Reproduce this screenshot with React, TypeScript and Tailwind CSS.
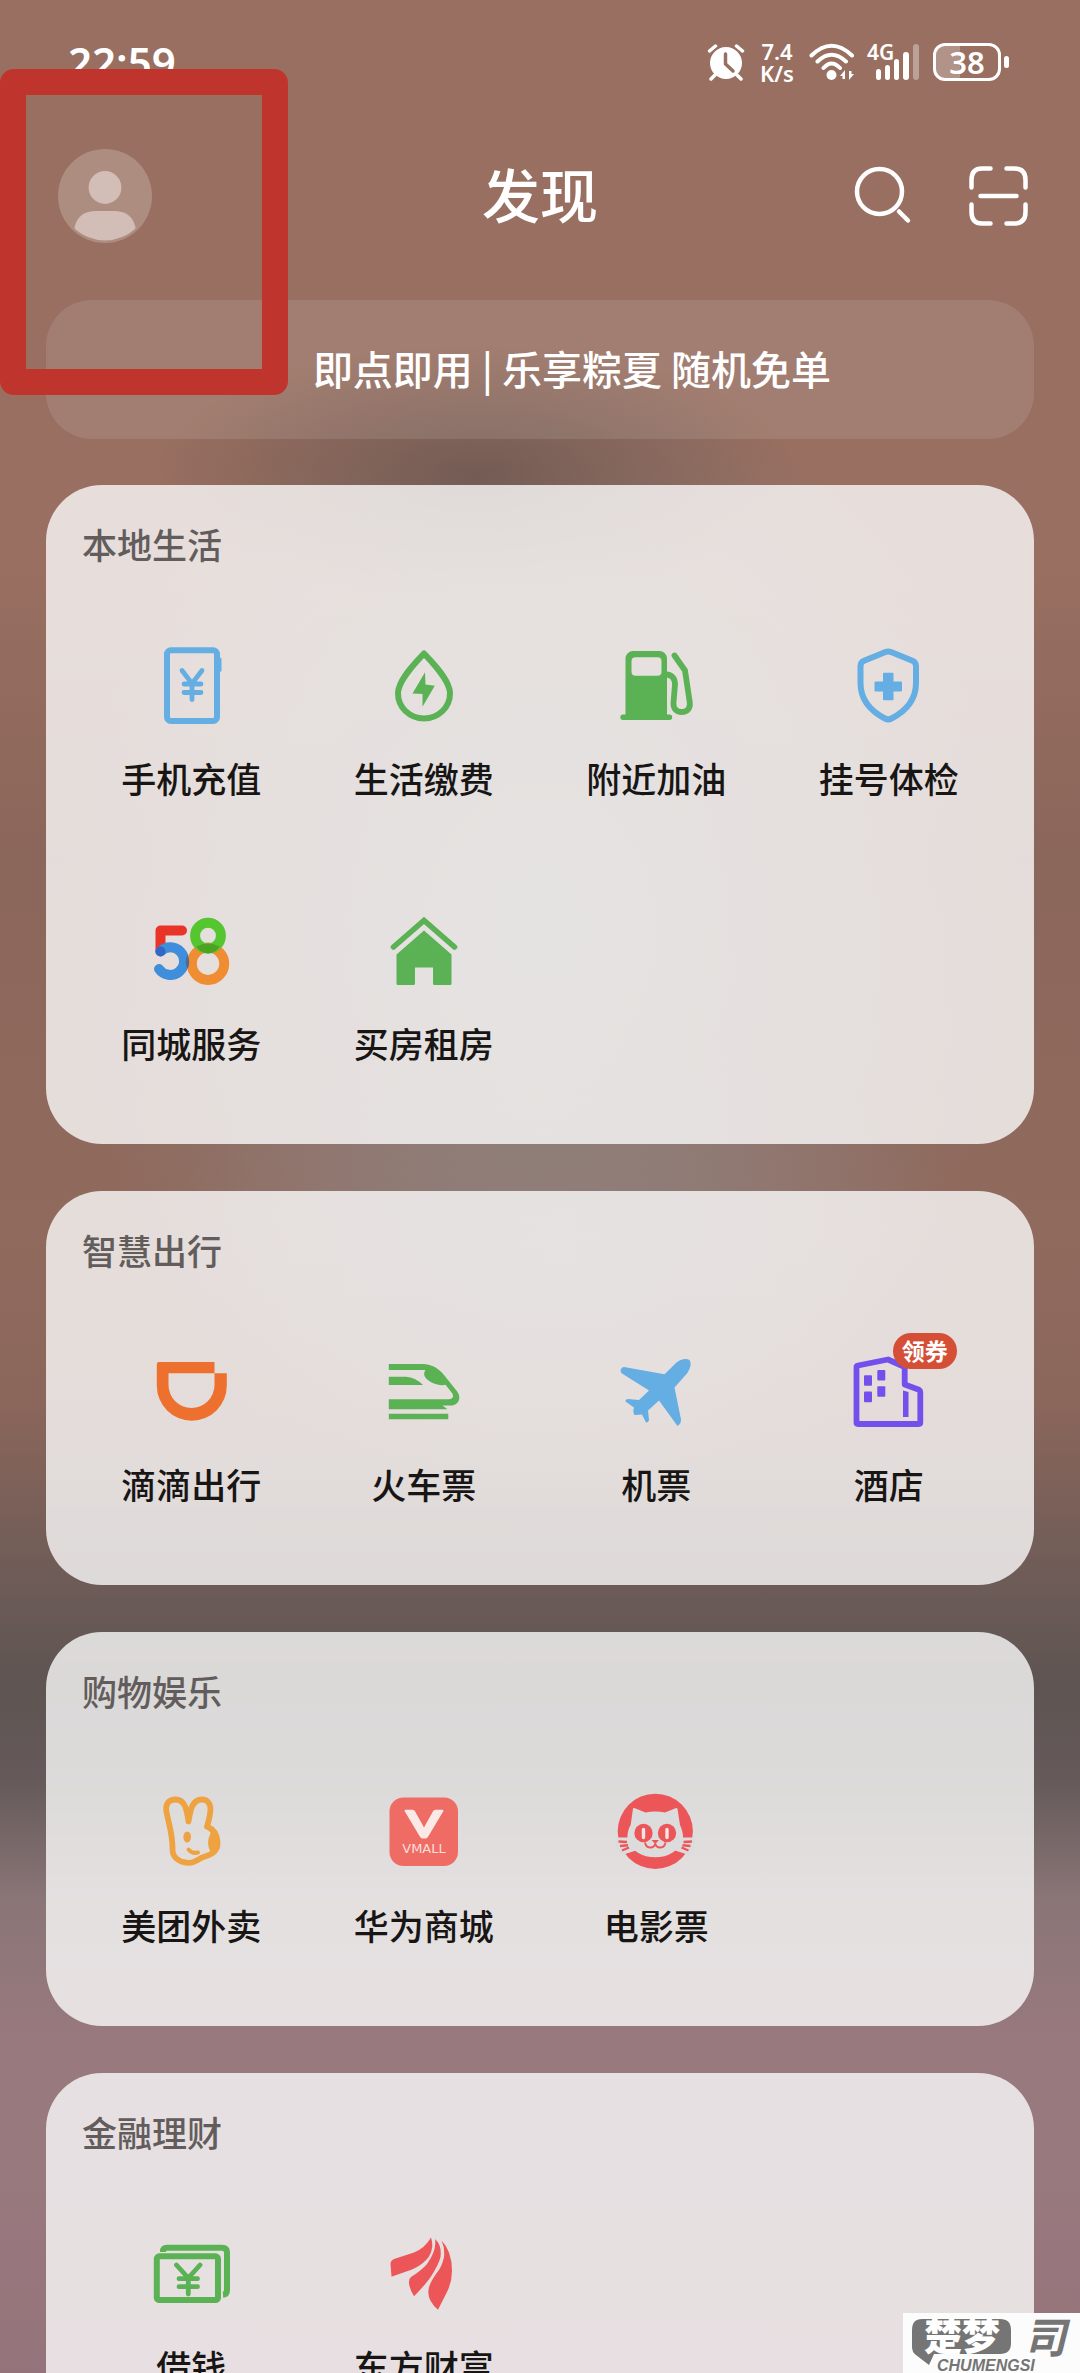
import type { ReactNode } from "react";

type Service = {
  name: string;
  icon: ReactNode;
  badge?: string;
};

type Section = {
  title: string;
  services: Service[];
};

const BLUE = "#65aee3";
const GREEN = "#5bb255";
const RED = "#ed5659";

function Icon({ children }: { children: ReactNode }) {
  return (
    <svg viewBox="0 0 80 80" className="size-20" fill="none" aria-hidden="true">
      {children}
    </svg>
  );
}

const PhoneTopUp = () => (
  <Icon>
    <rect x="16" y="5.3" width="50" height="70.7" rx="4" stroke={BLUE} strokeWidth="6" />
    <path d="M68 12.5h1a1.5 1.5 0 0 1 1.5 1.5v12.5h-2.5z" fill={BLUE} />
    <path d="M31 25.5l10 13 10-13M41 38.5v16M33 39h17M33 47.5h17" stroke={BLUE} strokeWidth="4.8" strokeLinecap="round" />
  </Icon>
);

const Utilities = () => (
  <Icon>
    <path d="M40 8.5C32 17 14 35 14 48.5a26 25 0 0 0 52 0C66 35 48 17 40 8.5z" stroke={GREEN} strokeWidth="6" strokeLinejoin="round" />
    <path d="M41 27.3L28.5 48.6l10 .4v12.7l12.3-21-9.3-1.2z" fill={GREEN} />
  </Icon>
);

const FuelPump = () => (
  <Icon>
    <path
      d="M17 6h26.5a7.5 7.5 0 0 1 7.5 7.5V69.5h2.5a2.7 2.7 0 0 1 0 5.4H7a2.7 2.7 0 0 1 0-5.4h2.5V13.5A7.5 7.5 0 0 1 17 6zm2.5 6.3a4 4 0 0 0-4 4v10.4a4 4 0 0 0 4 4h22a4 4 0 0 0 4-4V16.3a4 4 0 0 0-4-4z"
      fill={GREEN}
      fillRule="evenodd"
    />
    <path
      d="M51 29.5c5 .5 8 4 8 10l-1.5 18c-.5 6 3 9.5 8 9.5 6 0 9-4 8.3-9.5L69 25.5l-10.5-15"
      stroke={GREEN}
      strokeWidth="5.8"
      strokeLinecap="round"
      strokeLinejoin="round"
    />
  </Icon>
);

const Health = () => (
  <Icon>
    <path
      d="M36.5 7Q39.3 5.8 42 7L63.5 15.8Q67 17.3 67 21V38C67 55 56 66.5 42.5 73.5Q39.3 75.2 36 73.5C22.5 66.5 11.5 55 11.5 38V21Q11.5 17.3 15 15.8Z"
      stroke={BLUE}
      strokeWidth="6"
    />
    <path d="M35 27.7h8.5a1 1 0 0 1 1 1v7.8h7.5a1 1 0 0 1 1 1V45.5a1 1 0 0 1-1 1h-7.5v7.8a1 1 0 0 1-1 1H35a1 1 0 0 1-1-1v-7.8h-7.5a1 1 0 0 1-1-1V37.5a1 1 0 0 1 1-1H34v-7.8a1 1 0 0 1 1-1z" fill={BLUE} />
  </Icon>
);

const FiveEight = () => (
  <Icon>
    <g strokeLinecap="round" strokeLinejoin="round" strokeWidth="10">
      <path d="M31 20.5H9.5V41" stroke="#e93428" />
      <path d="M9.5 41.5A13.8 13.8 0 1 1 8 59" stroke="#3f8edb" />
      <circle cx="57" cy="53.7" r="16.2" stroke="#f08c32" />
      <circle cx="57" cy="25.7" r="12.9" stroke="#55c62f" />
    </g>
    <circle cx="9.5" cy="41.5" r="5" fill="#3167c6" />
    <path d="M45.5 36.5Q57 30.5 68.5 36.5Q65 43 57 43.4Q49 43 45.5 36.5z" fill="#4ca323" />
    <path d="M36.5 44.5q3.5 8 0 14.5q-3.5-7 0-14.5z" fill="#53688c" />
  </Icon>
);

const House = () => (
  <Icon>
    <path d="M9.5 37L40 10.5 70.5 37" stroke={GREEN} strokeWidth="5.6" strokeLinecap="round" />
    <path d="M40 20.5L67.5 44.5V73.5a1.5 1.5 0 0 1-1.5 1.5H50.5a1.5 1.5 0 0 1-1.5-1.5V57.5H31V73.5a1.5 1.5 0 0 1-1.5 1.5H14a1.5 1.5 0 0 1-1.5-1.5V44.5z" fill={GREEN} />
  </Icon>
);

const Ride = () => (
  <Icon>
    <path d="M8 11H63.5V22.3H75.8V34.7a35 35 0 0 1-70 0V13.2A2.2 2.2 0 0 1 8 11zM17.5 22.3V34a23 23 0 0 0 46 0V22.3z" fill="#ee702e" />
  </Icon>
);

const Train = () => (
  <Icon>
    <path
      d="M4.8 13H38C49 13 55 18 60 24L72 39C79 47 74 55 66 54.5H58.5L63.5 58.3H4.8V48.3H65C69 48 70 45 68 42L61.5 33.8C55 35.5 44 31 41 26C39.5 23 40 21 41.5 19H4.8ZM4.8 25.7H22Q31 26 39 34H4.8ZM4.8 62.7H64.3V68.3H4.8Z"
      fill={GREEN}
    />
  </Icon>
);

const Plane = () => (
  <Icon>
    <path
      d="M4.5 19.5Q5.5 16 8 16L48.5 23.3L60 12C64 8.5 70 7 73.5 9C76 12.5 74 18 71 22.5L58.5 36.5L65 68.5Q65 73 61.5 75L43 49.5L32 59.5L33 69Q32.5 71.5 30 71.5L26 63.5L18.5 64Q16.5 61 18 56.5L9.5 50.5Q9.5 48 12 48L23 49L33 39.5L6 22.5Q4.5 21 4.5 19.5z"
      fill={BLUE}
    />
  </Icon>
);

const Hotel = () => (
  <Icon>
    <path d="M7.5 16Q7.5 14.8 9 14.5L39 8.5 55.7 16V33.5L70 38.8Q71.3 39.5 71.3 41V71.5Q71.3 73 69.8 73H9Q7.5 73 7.5 71.5Z" stroke="#7350ec" strokeWidth="5.8" strokeLinejoin="round" />
    <g fill="#7350ec">
      <rect x="15" y="24.3" width="8" height="10.5" rx="1" />
      <rect x="15" y="40.5" width="8" height="10.8" rx="1" />
      <rect x="28.3" y="19" width="8" height="10.5" rx="1" />
      <rect x="28.3" y="35.3" width="8" height="10.5" rx="1" />
      <path d="M54 39.5l5.5 1.5V66H54z" />
    </g>
  </Icon>
);

const Bunny = () => (
  <Icon>
    <path
      d="M37.5 29.5C36 18 34 7.5 24.5 7.5C17 7.5 14 13 15.5 20C18 33 21.5 42 21.5 56C21 64 26 70.5 38 70.8C44 71 46 67 54 64.5C63 62 67 57 66.5 50C66 42 62 37 56 34.5C58 28 59.5 21 59.5 16C59 10.5 55.5 7.5 51 7.5C41 7.5 39.5 18 37.5 29.5Z"
      stroke="#efa240"
      strokeWidth="5.8"
      strokeLinejoin="round"
    />
    <path d="M60 40C68 43 70.5 51 67 57Q64 61 60 60Q54 52 60 40z" fill="#efa240" />
    <ellipse cx="36.2" cy="45" rx="3.8" ry="5.6" fill="#efa240" />
    <path d="M37.5 57.5Q41 62 47 60.5" stroke="#efa240" strokeWidth="4" strokeLinecap="round" />
  </Icon>
);

const Vmall = () => (
  <Icon>
    <rect x="5.5" y="5.5" width="68.5" height="68.5" rx="14" fill="#ef6c64" />
    <path d="M21.5 17.7h7.2q1.5 0 2.3 1.5L40 35.5l9-16.3q.8-1.5 2.3-1.5h7.2q1.5 0 .8 1.5L44.5 44q-1.5 2.5-3 2.5h-3q-1.5 0-3-2.5L20.7 19.2q-.7-1.5.8-1.5z" fill="#fbe9e7" />
    <text x="40" y="61" textAnchor="middle" fill="#fbdedb" className="font-['DejaVu_Sans'] text-[13px]">
      VMALL
    </text>
  </Icon>
);

const Cat = () => (
  <Icon>
    <circle cx="39.3" cy="39.3" r="37.6" fill={RED} />
    <g fill="#dddcdc">
      <path d="M17 16.5Q17.5 15.5 19 16.3L29.5 20.5Q39 18.5 49 20.5L59.5 16.3Q61 15.5 61.5 17L64 33C66 37 68 44 66.5 48C63 59 52 65.3 39.3 65.3C26.5 65.3 15 59 12 48C10.5 44 12.5 36 14.7 33z" />
      <path d="M0 45.5h14l6 13L6 63L0 56zM79 45.5H65l-6 13L73 63l6-7z" />
    </g>
    <path d="M2.5 49.5l8.5.5M4 54l8-.8M6 58.5l7-3M76 49.5l-8.5.5M74.5 54l-8-.8M72.5 58.5l-7-3" stroke={RED} strokeWidth="2.4" />
    <circle cx="27.5" cy="41" r="9.2" fill={RED} />
    <circle cx="51" cy="41" r="9.2" fill={RED} />
    <path d="M27.5 37.5v8M51 37.5v8" stroke="#f4e4e4" strokeWidth="3.4" strokeLinecap="round" />
    <path d="M29 50.5C30 57 38 57 39.3 51.5C40.5 57 48.5 57 49.5 50.5" stroke={RED} strokeWidth="1.8" />
    <path d="M35.5 48h7.5l-3.7 4z" fill={RED} />
  </Icon>
);

const Loan = () => (
  <Icon>
    <path d="M12 19V18.5Q12 14.8 16 14.8H71Q76 14.8 76 19.5V57Q76 61.5 72 61.8" stroke={GREEN} strokeWidth="6" />
    <rect x="5.8" y="23.3" width="61.2" height="43.7" rx="2.5" stroke={GREEN} strokeWidth="6" />
    <path d="M25.5 32l11.8 13L49 32M37.3 45v16M28 45.7h18.5M28 53.7h18.5" stroke={GREEN} strokeWidth="4.8" strokeLinecap="round" />
  </Icon>
);

const EastMoney = () => (
  <Icon>
    <g fill={RED}>
      <path d="M47 4.5Q41 15 30 19.5L10 26Q6.5 27.5 6.5 31L7.5 43.7Q18 40 28 36.5Q40 31 45 23.5Q50.5 14 47 4.5z" />
      <path d="M51 6Q53 17 43 31Q38 37 27 44Q24.5 46 25 50.5Q26 57 30 63.3Q42 51 47 43.5Q55 31 56.5 24Q58 12 51 6z" />
      <path d="M57.5 7.5Q61 15 60 24Q58 34 52 41Q45 51 44.5 57Q43 67 54 76.7Q59 67 63 59Q68 49 68 38Q68 18 57.5 7.5z" />
    </g>
  </Icon>
);

const sections: Section[] = [
  {
    title: "本地生活",
    services: [
      { name: "手机充值", icon: <PhoneTopUp /> },
      { name: "生活缴费", icon: <Utilities /> },
      { name: "附近加油", icon: <FuelPump /> },
      { name: "挂号体检", icon: <Health /> },
      { name: "同城服务", icon: <FiveEight /> },
      { name: "买房租房", icon: <House /> },
    ],
  },
  {
    title: "智慧出行",
    services: [
      { name: "滴滴出行", icon: <Ride /> },
      { name: "火车票", icon: <Train /> },
      { name: "机票", icon: <Plane /> },
      { name: "酒店", icon: <Hotel />, badge: "领券" },
    ],
  },
  {
    title: "购物娱乐",
    services: [
      { name: "美团外卖", icon: <Bunny /> },
      { name: "华为商城", icon: <Vmall /> },
      { name: "电影票", icon: <Cat /> },
    ],
  },
  {
    title: "金融理财",
    services: [
      { name: "借钱", icon: <Loan /> },
      { name: "东方财富", icon: <EastMoney /> },
    ],
  },
];

function StatusBar() {
  return (
    <div className="flex h-[124px] items-center justify-between pr-[71px] pl-[68px] font-['Noto_Sans',sans-serif] font-semibold">
      <span className="text-[42px] leading-[48px]">22:59</span>
      <div className="flex items-center">
        <svg viewBox="0 0 38 38" className="size-[38px]" fill="none" aria-hidden="true">
          <circle cx="19" cy="20" r="16" fill="#fff" />
          <path d="M2.5 8l6-5M35.5 8l-6-5M8 32l-4 4M30 32l4 4" stroke="#fff" strokeWidth="3.5" strokeLinecap="round" />
          <path d="M18.5 11v10l7.5 7" stroke="#967062" strokeWidth="3.5" strokeLinecap="round" strokeLinejoin="round" />
        </svg>
        <div className="ml-[14px] flex w-9 flex-col items-center text-[22px] leading-[22px]">
          <span>7.4</span>
          <span>K/s</span>
        </div>
        <svg viewBox="0 0 46 38" className="ml-[14px] h-[38px] w-[46px]" fill="none" aria-hidden="true">
          <path d="M2.5 12.5Q22.5-7 43 12.5M8.5 18.5Q22.5 5 37 18.5M14.5 25Q22.5 16 31 25" stroke="#fff" strokeWidth="4" strokeLinecap="round" />
          <circle cx="22.5" cy="32" r="5" fill="#fff" />
          <path d="M31 33l5-6v9h-2.5v-3zM45 31l-5 6v-9h2.5v3z" fill="#fff" />
        </svg>
        <svg viewBox="0 0 54 38" className="ml-3 h-[38px] w-[54px] overflow-visible" aria-hidden="true">
          <text x="0" y="17" fill="#fff" className="font-['Noto_Sans'] text-[21px]">
            4G
          </text>
          <g fill="#fff">
            <rect x="9" y="26" width="5" height="11" rx="2.5" />
            <rect x="18" y="22" width="5" height="15" rx="2.5" />
            <rect x="27" y="16" width="5" height="21" rx="2.5" />
            <rect x="36" y="9" width="6" height="28" rx="3" />
            <rect x="46" y="1" width="6" height="36" rx="3" fillOpacity="0.35" />
          </g>
        </svg>
        <div className="ml-3 flex items-center gap-[3px]">
          <div className="flex h-[38px] w-[68px] items-center justify-center rounded-xl border-[3px] border-white bg-linear-to-r from-white/25 from-38% to-transparent to-38% text-[31px] leading-none">
            38
          </div>
          <div className="h-3 w-[5px] rounded-full bg-white" />
        </div>
      </div>
    </div>
  );
}

function Header() {
  return (
    <header className="grid h-36 grid-cols-3 items-center px-[50px]">
      <button type="button" aria-label="个人中心" className="justify-self-start pl-2">
        <svg viewBox="0 0 94 94" className="size-[94px]" aria-hidden="true">
          <clipPath id="avatar">
            <circle cx="47" cy="47" r="44.5" />
          </clipPath>
          <circle cx="47" cy="47" r="47" fill="#ae8d81" />
          <circle cx="47" cy="38.5" r="16.4" fill="#d2beb7" />
          <path d="M16 81C18 67 27 62 38 62H56C67 62 76 67 78 81V94H16z" fill="#d2beb7" clipPath="url(#avatar)" />
        </svg>
      </button>
      <h1 className="pb-[6px] text-center text-[58px] leading-[76px] font-medium">发现</h1>
      <div className="flex items-center gap-[54px] justify-self-end">
        <button type="button" aria-label="搜索">
          <svg viewBox="0 0 60 60" className="size-[60px]" fill="none" stroke="#fff" strokeWidth="4.5" strokeLinecap="round" aria-hidden="true">
            <circle cx="25.5" cy="25.5" r="22.5" />
            <path d="M45 45.5l9 9" />
          </svg>
        </button>
        <button type="button" aria-label="扫一扫">
          <svg viewBox="0 0 62 62" className="size-[62px]" fill="none" stroke="#fff" strokeWidth="4.5" strokeLinecap="round" aria-hidden="true">
            <path d="M3.5 22.5V15Q3.5 3.5 14 3.5H22.5M38.5 3.5H46Q57.5 3.5 57.5 15V22.5M57.5 39.5V47Q57.5 58.5 46 58.5H38.5M22.5 58.5H14Q3.5 58.5 3.5 47V39.5M12.5 31H48.5" />
          </svg>
        </button>
      </div>
    </header>
  );
}

function ServiceItem({ name, icon, badge }: Service) {
  return (
    <li>
      <button type="button" className="flex w-full flex-col items-center gap-[30px]">
        <span className="relative">
          {icon}
          {badge && (
            <span className="absolute -top-[18px] left-11 h-9 w-16 rounded-full bg-[#d54f37] text-center text-[23px] leading-[34px] font-bold text-white">
              {badge}
            </span>
          )}
        </span>
        <span className="text-[35px] leading-[45px] font-medium whitespace-nowrap text-[#181615]">{name}</span>
      </button>
    </li>
  );
}

function SectionCard({ title, services }: Section) {
  return (
    <section className="rounded-[56px] bg-[#fcfcfc]/79 px-[29px] pt-[37px] pb-[79px]">
      <h2 className="pl-[7px] text-[35px] leading-[44px] font-medium text-[#625d5c]">{title}</h2>
      <ul className="mt-[79px] grid grid-cols-4 gap-y-[110px]">
        {services.map((service) => (
          <ServiceItem key={service.name} {...service} />
        ))}
      </ul>
    </section>
  );
}

// site stamp in the bottom right corner
function Watermark() {
  return (
    <div className="absolute right-0 bottom-0 h-[60px] w-[177px] bg-[#fcfcfc] pt-1 pl-[9px] text-[#757575]">
      <div className="flex h-10 gap-3">
        <svg viewBox="0 0 100 48" className="mt-[2px] h-12 w-[100px] overflow-visible" aria-hidden="true">
          <path d="M10 0H88Q99 0 99 11V24Q99 35 88 35H22L17 46L4 36Q0 33 0 28V11Q0 0 10 0z" fill="#757575" />
          <text x="50" y="31" textAnchor="middle" fill="#fff" className="font-['Noto_Sans_CJK_SC'] text-[38px] font-black">
            楚梦
          </text>
        </svg>
        <span className="text-[42px] leading-9 font-bold italic">司</span>
      </div>
      <span className="absolute bottom-0 left-[34px] font-['Liberation_Sans',sans-serif] text-[16px] leading-[15px] font-bold italic">
        CHUMENGSI
      </span>
    </div>
  );
}

export default function App() {
  return (
    <div className="relative h-screen overflow-hidden bg-[radial-gradient(320px_130px_at_44%_20%,#62504aaa,#62504a00),radial-gradient(480px_560px_at_50%_39%,#8f8582,#8f858200),radial-gradient(400px_240px_at_52%_53%,#93848799,#93848700),linear-gradient(#986f61,#986f61_24%,#8b665a_36%,#906a5d_52%,#8b665b_59%,#6c5b57_67%,#5e5452_71%,#655a59_75%,#8a7577_80%,#98797e_86%,#98797e_92%,#95737a)] font-['Noto_Sans_CJK_SC',sans-serif] text-white">
      <StatusBar />
      <Header />
      <div className="mx-[46px] mt-8 flex h-[139px] items-center justify-center rounded-[46px] bg-white/10 pb-1 pl-16 text-[40px] leading-[56px] font-medium">
        即点即用 | 乐享粽夏 随机免单
      </div>
      <main className="mx-[46px] mt-[46px] flex flex-col gap-[47px]">
        {sections.map((section) => (
          <SectionCard key={section.title} {...section} />
        ))}
      </main>

      {/* highlight frame around the avatar */}
      <div className="pointer-events-none absolute top-[69px] left-0 h-[326px] w-72 rounded-[14px] border-26 border-[#bf352e]" />
      <Watermark />
    </div>
  );
}
